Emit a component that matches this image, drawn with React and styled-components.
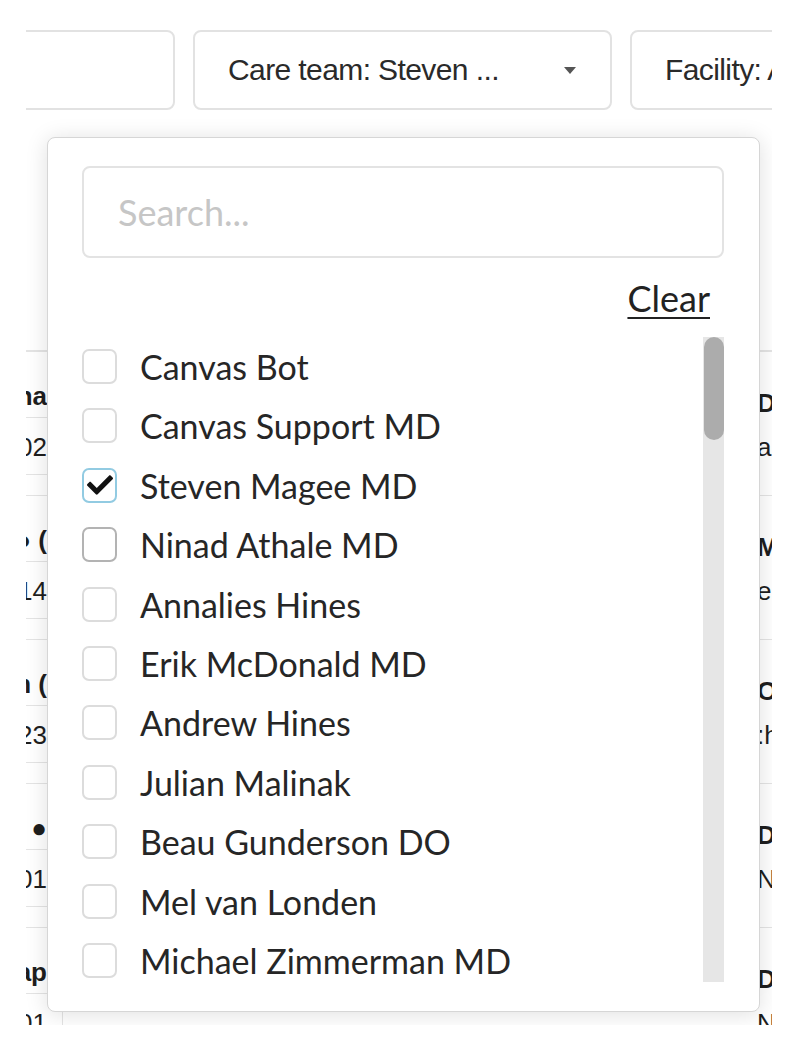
import styled, { createGlobalStyle } from 'styled-components'
import { FaCheck } from 'react-icons/fa'

const GlobalStyle = createGlobalStyle`
  body {
    margin: 0;
    background-color: #ffffff;
    font-family: "Liberation Sans", Arial, sans-serif;
  }
`

const Viewport = styled.div`
  position: relative;
  margin-left: 26px;
  width: 746px;
  height: 1025px;
  overflow: hidden;
  background-color: #ffffff;
`

const FilterBar = styled.div`
  display: flex;
  gap: 18px;
  padding-top: 30px;
  margin-left: -51px;
`

const FilterButton = styled.div`
  flex: 0 0 ${(p) => p.$width}px;
  height: 80px;
  box-sizing: border-box;
  display: flex;
  align-items: center;
  justify-content: space-between;
  padding: 0 33px;
  border: 2px solid #e2e2e2;
  border-radius: 8px;
  font-size: 30px;
  letter-spacing: -0.6px;
  color: #2a2a2a;
  white-space: nowrap;
  overflow: hidden;
`

const Caret = styled.span`
  width: 0;
  height: 0;
  margin-right: 1px;
  border-left: 6px solid transparent;
  border-right: 6px solid transparent;
  border-top: 7px solid #555555;
`

const Table = styled.div`
  margin-top: 240px;
  margin-left: -163px;
  border-top: 2px solid #e4e4e4;
`

const Row = styled.div`
  display: grid;
  grid-template-columns: 200px 694px 200px;
  height: 144px;
  border-bottom: 1px solid #e4e4e4;
  box-sizing: border-box;
`

const NameCell = styled.div`
  display: flex;
  flex-direction: column;
  border-right: 1px solid #e4e4e4;
`

const NameBlock = styled.div`
  height: ${(p) => p.$height}px;
  box-sizing: border-box;
  padding-top: ${(p) => p.$top}px;
  padding-right: 15px;
  text-align: right;
  line-height: 26px;
  font-size: 26px;
  font-weight: ${(p) => (p.$bold ? 700 : 400)};
  color: #1e1e1e;
  white-space: nowrap;
  & + & {
    border-top: 1px solid #e4e4e4;
  }
`

const DetailCell = styled.div`
  padding-top: 29px;
  line-height: 44px;
  font-size: 26px;
  color: #1e1e1e;
  white-space: nowrap;
`

const DetailTitle = styled.div`
  font-weight: 700;
`

const Dropdown = styled.div`
  position: absolute;
  left: 21px;
  top: 137px;
  width: 713px;
  height: 875px;
  box-sizing: border-box;
  padding: 28px 35px 29px 34px;
  display: flex;
  flex-direction: column;
  background-color: #ffffff;
  border: 1px solid #d6d6d6;
  border-radius: 8px;
  box-shadow: 0 2px 22px rgba(0, 0, 0, 0.13);
  font-family: Lato, "Noto Sans", sans-serif;
`

const SearchInput = styled.input`
  height: 92px;
  width: 100%;
  flex: 0 0 92px;
  box-sizing: border-box;
  padding: 0 34px;
  border: 2px solid #e3e3e3;
  border-radius: 8px;
  outline: none;
  font-family: Lato, "Noto Sans", sans-serif;
  font-size: 36px;
  color: #222222;

  &::placeholder {
    color: #c6c6c6;
  }
`

const ClearRow = styled.div`
  display: flex;
  justify-content: flex-end;
  margin-top: 19px;
  padding-right: 14px;
`

const ClearLink = styled.a`
  font-size: 36px;
  line-height: 43px;
  color: #222222;
  text-decoration: underline;
  text-underline-offset: 5px;
  text-decoration-thickness: 2px;
  cursor: pointer;
`

const ListArea = styled.div`
  display: flex;
  margin-top: 17px;
  height: 645px;
`

const Options = styled.div`
  flex: 1;
  display: flex;
  flex-direction: column;
  gap: 24.4px;
  padding-top: 12px;
  overflow: hidden;
`

const Option = styled.label`
  display: flex;
  align-items: center;
  gap: 23px;
  height: 35px;
  flex: 0 0 35px;
  font-size: 34px;
  line-height: 35px;
  color: #262626;
  white-space: nowrap;
`

const Box = styled.span`
  flex: 0 0 35px;
  height: 35px;
  box-sizing: border-box;
  display: flex;
  align-items: center;
  justify-content: center;
  border: 2px solid ${(p) => p.$border};
  border-radius: 7px;
  color: #111111;
`

const ScrollTrack = styled.div`
  flex: 0 0 21px;
  display: flex;
  justify-content: flex-end;
  background-color: #e6e6e6;
`

const ScrollThumb = styled.div`
  width: 20px;
  height: 103px;
  border-radius: 10px;
  background-color: #acacac;
`

const rows = [
  { name: 'Ana', date: '12/02', title: 'Dr. Lee', sub: 'annual' },
  { name: 'Ray ● (', date: '11/14', title: 'Med refill', sub: 'ernest' },
  { name: 'Ann (', date: '10/23', title: 'Ortho', sub: ':hart' },
  { name: 'Sam ●', date: '09/01', title: 'Derm', sub: 'New' },
  { name: 'Yap', date: '08/01', title: 'Diet', sub: 'Note' },
]

const members = [
  { name: 'Canvas Bot' },
  { name: 'Canvas Support MD' },
  { name: 'Steven Magee MD', checked: true },
  { name: 'Ninad Athale MD', hover: true },
  { name: 'Annalies Hines' },
  { name: 'Erik McDonald MD' },
  { name: 'Andrew Hines' },
  { name: 'Julian Malinak' },
  { name: 'Beau Gunderson DO' },
  { name: 'Mel van Londen' },
  { name: 'Michael Zimmerman MD' },
  { name: 'Scott Ferguson' },
]

const boxBorder = (m) => {
  if (m.checked) return '#92cbe2'
  if (m.hover) return '#b3b3b3'
  return '#dcdcdc'
}

const App = () => {
  return (
    <>
      <GlobalStyle />
      <Viewport>
        <FilterBar>
          <FilterButton $width={200} />
          <FilterButton $width={419}>
            Care team: Steven ...
            <Caret />
          </FilterButton>
          <FilterButton $width={300}>Facility: All</FilterButton>
        </FilterBar>

        <Table>
          {rows.map((r) => (
            <Row key={r.name}>
              <NameCell>
                <NameBlock $height={65} $top={31} $bold>
                  {r.name}
                </NameBlock>
                <NameBlock $height={57} $top={16}>
                  {r.date}
                </NameBlock>
                <NameBlock $height={22} $top={0} />
              </NameCell>
              <div />
              <DetailCell>
                <DetailTitle>{r.title}</DetailTitle>
                <div>{r.sub}</div>
              </DetailCell>
            </Row>
          ))}
        </Table>

        <Dropdown>
          <SearchInput placeholder="Search..." />
          <ClearRow>
            <ClearLink>Clear</ClearLink>
          </ClearRow>
          <ListArea>
            <Options>
              {members.map((m) => (
                <Option key={m.name}>
                  <Box $border={boxBorder(m)}>
                    {m.checked && <FaCheck size={26} />}
                  </Box>
                  {m.name}
                </Option>
              ))}
            </Options>
            <ScrollTrack>
              <ScrollThumb />
            </ScrollTrack>
          </ListArea>
        </Dropdown>
      </Viewport>
    </>
  )
}

export default App
